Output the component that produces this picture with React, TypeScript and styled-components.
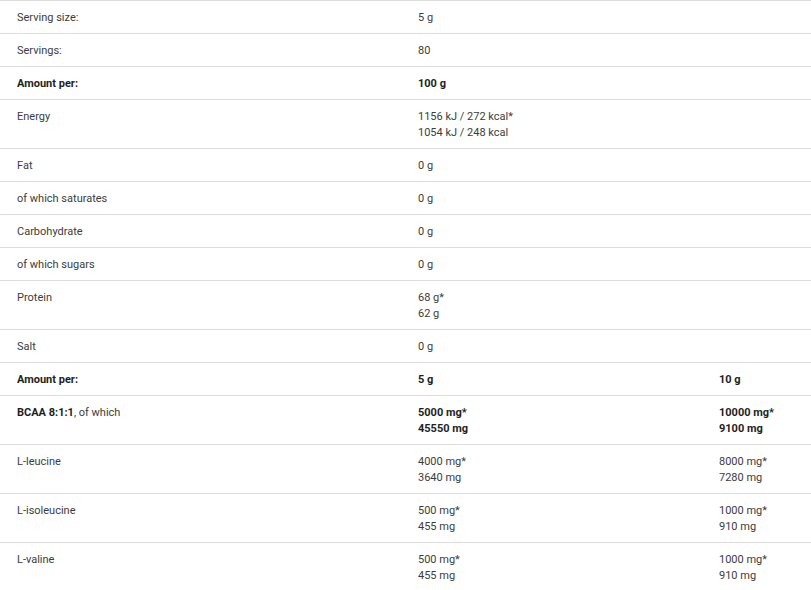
import React from "react";
import styled, { createGlobalStyle } from "styled-components";

const GlobalStyle = createGlobalStyle`
  body {
    margin: 0;
    background: #ffffff;
    font-family: Roboto, "Liberation Sans", sans-serif;
  }
`;

type Cell = { lines: string[]; bold?: boolean; boldPrefix?: string };
type RowData = { label: Cell; per: Cell; second?: Cell };

const rows: RowData[] = [
  { label: { lines: ["Serving size:"] }, per: { lines: ["5 g"] } },
  { label: { lines: ["Servings:"] }, per: { lines: ["80"] } },
  { label: { lines: ["Amount per:"], bold: true }, per: { lines: ["100 g"], bold: true } },
  { label: { lines: ["Energy"] }, per: { lines: ["1156 kJ / 272 kcal*", "1054 kJ / 248 kcal"] } },
  { label: { lines: ["Fat"] }, per: { lines: ["0 g"] } },
  { label: { lines: ["of which saturates"] }, per: { lines: ["0 g"] } },
  { label: { lines: ["Carbohydrate"] }, per: { lines: ["0 g"] } },
  { label: { lines: ["of which sugars"] }, per: { lines: ["0 g"] } },
  { label: { lines: ["Protein"] }, per: { lines: ["68 g*", "62 g"] } },
  { label: { lines: ["Salt"] }, per: { lines: ["0 g"] } },
  {
    label: { lines: ["Amount per:"], bold: true },
    per: { lines: ["5 g"], bold: true },
    second: { lines: ["10 g"], bold: true },
  },
  {
    label: { lines: [", of which"], boldPrefix: "BCAA 8:1:1" },
    per: { lines: ["5000 mg*", "45550 mg"], bold: true },
    second: { lines: ["10000 mg*", "9100 mg"], bold: true },
  },
  {
    label: { lines: ["L-leucine"] },
    per: { lines: ["4000 mg*", "3640 mg"] },
    second: { lines: ["8000 mg*", "7280 mg"] },
  },
  {
    label: { lines: ["L-isoleucine"] },
    per: { lines: ["500 mg*", "455 mg"] },
    second: { lines: ["1000 mg*", "910 mg"] },
  },
  {
    label: { lines: ["L-valine"] },
    per: { lines: ["500 mg*", "455 mg"] },
    second: { lines: ["1000 mg*", "910 mg"] },
  },
];

export default function App() {
  return (
    <>
      <GlobalStyle />
      <Table>
        {rows.map((row, i) => (
          <Row key={i}>
            <TableCell cell={row.label} />
            <TableCell cell={row.per} />
            {row.second ? <TableCell cell={row.second} /> : <Td />}
          </Row>
        ))}
      </Table>
    </>
  );
}

const TableCell = ({ cell }: { cell: Cell }) => (
  <Td $bold={cell.bold}>
    {cell.lines.map((line, i) => (
      <Line key={i}>
        {i === 0 && cell.boldPrefix && <strong>{cell.boldPrefix}</strong>}
        {line}
      </Line>
    ))}
  </Td>
);

const Table = styled.div`
  width: 100%;
  display: flex;
  flex-direction: column;
  overflow: hidden;
`;

const Row = styled.div`
  display: grid;
  grid-template-columns: 401px 301px 1fr;
  border-top: 1px solid #dcdcdc;
`;

const Td = styled.div<{ $bold?: boolean }>`
  padding: 9px 16px 7px 17px;
  font-size: 11px;
  line-height: 16px;
  color: ${(p) => (p.$bold ? "#1e1e1e" : "#3c3c3c")};
  font-weight: ${(p) => (p.$bold ? 700 : 400)};

  strong {
    color: #1e1e1e;
    font-weight: 700;
  }
`;

const Line = styled.div`
  white-space: nowrap;
`;
